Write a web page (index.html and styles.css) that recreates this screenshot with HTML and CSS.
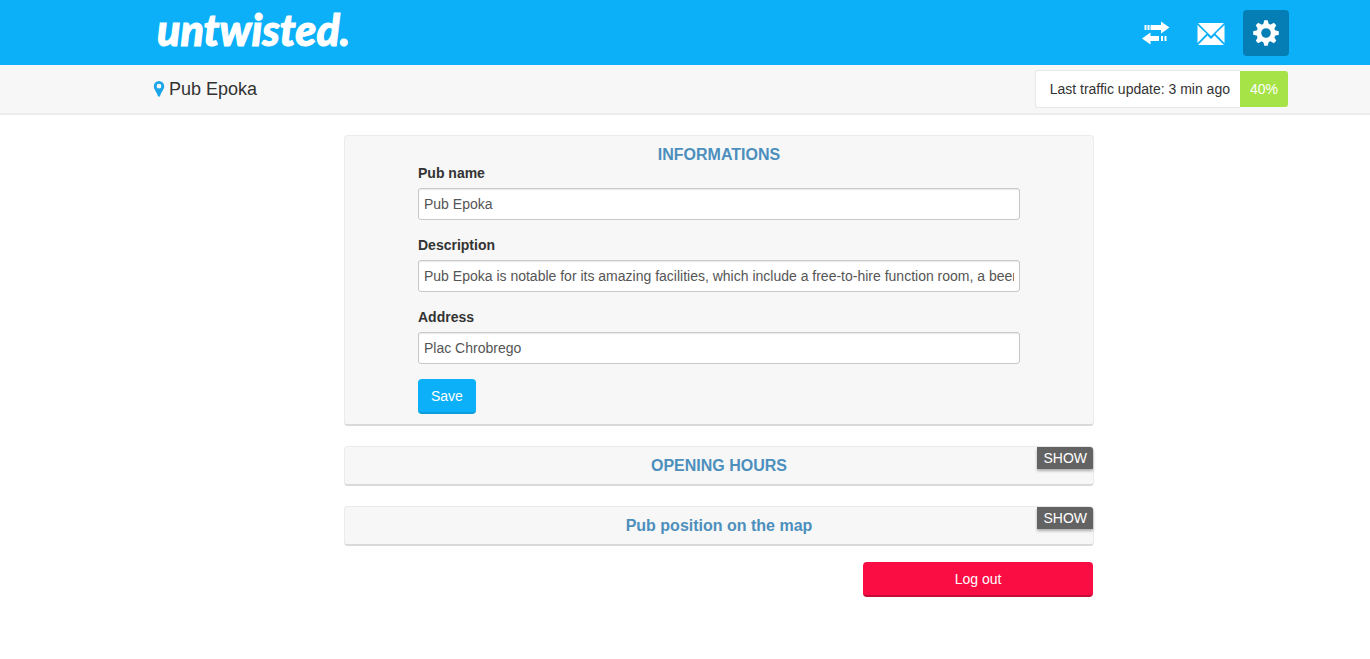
FILE: index.html
```html
<!DOCTYPE html>
<html lang="en">
<head>
<meta charset="utf-8">
<title>untwisted. – Pub Epoka</title>
<meta name="viewport" content="width=device-width, initial-scale=1">
<link rel="stylesheet" href="styles.css">
</head>
<body>
<header class="topbar">
  <div class="container">
    <a class="brand" href="#">untwisted.</a>
    <nav class="nav">
      <a class="nav-link" href="#" aria-label="Traffic">
        <svg class="icon" viewBox="0 0 28 28" width="28" height="28"><path d="M2.500 6h2v5h-2zM5.500 6h2v5h-2zM8.500 6H19V2.500L27.500 8.500 19 14.500V11H8.500zM24.500 22h-2v-5h2zM21 22h-2v-5h2zM17 22H8.500v3.500L0 19.500l8.500-6V17H17z" fill="currentColor"/></svg>
      </a>
      <a class="nav-link" href="#" aria-label="Messages">
        <svg class="icon" viewBox="0 0 28 28" width="28" height="28"><path d="M1 4h26L14 17zM.5 6l9 8.700-9 9.300zM27.500 6v18l-9-9.300zM10.500 16.500L14 20l3.500-3.500L27 26H1z" fill="currentColor"/></svg>
      </a>
      <a class="nav-link nav-link-active" href="#" aria-label="Settings" aria-current="page">
        <svg class="icon" viewBox="0 0 28 28" width="28" height="28">
          <g fill="currentColor">
            <path fill-rule="evenodd" d="M14 4.500a9.500 9.500 0 1 0 0 19 9.500 9.500 0 0 0 0-19zm0 4.700a4.800 4.800 0 1 1 0 9.600 4.800 4.800 0 0 1 0-9.600z"/>
            <path id="tooth" d="M12.300 1.200h3.400l1.300 4.800h-6z"/>
            <use href="#tooth" transform="rotate(45 14 14)"/>
            <use href="#tooth" transform="rotate(90 14 14)"/>
            <use href="#tooth" transform="rotate(135 14 14)"/>
            <use href="#tooth" transform="rotate(180 14 14)"/>
            <use href="#tooth" transform="rotate(225 14 14)"/>
            <use href="#tooth" transform="rotate(270 14 14)"/>
            <use href="#tooth" transform="rotate(315 14 14)"/>
          </g>
        </svg>
      </a>
    </nav>
  </div>
</header>

<div class="subbar">
  <div class="container">
    <div class="place">
      <svg class="pin" viewBox="0 0 12 16" width="12" height="16"><path fill-rule="evenodd" d="M6 0a5.200 5.200 0 0 1 5.200 5.200C11.200 8.700 8 11 7 15.500H5C4 11 .8 8.700.8 5.200A5.200 5.200 0 0 1 6 0zm0 2.800a2.400 2.400 0 1 0 0 4.800 2.400 2.400 0 0 0 0-4.800z" fill="currentColor"/></svg>
      <span>Pub Epoka</span>
    </div>
    <div class="traffic">
      <span class="traffic-text">Last traffic update: 3 min ago</span>
      <span class="traffic-value">40%</span>
    </div>
  </div>
</div>

<main class="content">
  <section class="card">
    <h2 class="card-title">INFORMATIONS</h2>
    <form class="form">
      <div class="field">
        <label class="label" for="name">Pub name</label>
        <input class="input" id="name" type="text" value="Pub Epoka">
      </div>
      <div class="field">
        <label class="label" for="description">Description</label>
        <input class="input" id="description" type="text" value="Pub Epoka is notable for its amazing facilities, which include a free-to-hire function room, a beer garden and live music.">
      </div>
      <div class="field">
        <label class="label" for="address">Address</label>
        <input class="input" id="address" type="text" value="Plac Chrobrego">
      </div>
      <button class="button button-save" type="button">Save</button>
    </form>
  </section>

  <section class="card">
    <h2 class="card-title">OPENING HOURS</h2>
    <button class="toggle" type="button">SHOW</button>
  </section>

  <section class="card">
    <h2 class="card-title">Pub position on the map</h2>
    <button class="toggle" type="button">SHOW</button>
  </section>

  <div class="actions">
    <button class="button button-logout" type="button">Log out</button>
  </div>
</main>
</body>
</html>
```
FILE: styles.css
```css
* {
  box-sizing: border-box;
}

body {
  margin: 0;
  background: #fff;
  color: #333;
  font: 14px/20px "Liberation Sans", Arial, sans-serif;
}

.topbar,
.subbar,
.content {
  padding-left: 68px;
}

.container {
  display: flex;
  align-items: center;
  justify-content: space-between;
  max-width: 1140px;
  margin: 0 auto;
}

.topbar {
  background: #0bb0f8;
}

.topbar .container {
  min-height: 65px;
}

.brand {
  padding: 0 8px 6px;
  color: #fff;
  font: italic 900 43px/48px Lato, sans-serif;
  text-decoration: none;
  -webkit-text-stroke: 1px #fff;
}

.nav {
  display: flex;
  gap: 9px;
}

.nav-link {
  display: flex;
  align-items: center;
  justify-content: center;
  width: 46px;
  height: 46px;
  border-radius: 4px;
  color: #fff;
}

.nav-link-active {
  background: #047eb5;
}

.subbar {
  background: #f7f7f7;
  border-bottom: 2px solid #ececec;
}

.subbar .container {
  min-height: 48px;
}

.place {
  display: flex;
  align-items: center;
  gap: 4px;
  padding-left: 4px;
  font-size: 18px;
}

.pin {
  color: #1ba5e8;
}

.traffic {
  display: flex;
  margin-right: 1px;
  line-height: 36px;
}

.traffic-text {
  padding: 0 10px 0 14px;
  background: #fff;
  border: 1px solid #e7e7e7;
  border-right: 0;
  border-radius: 3px 0 0 3px;
}

.traffic-value {
  margin: 1px 0;
  padding: 0 10px;
  background: #a5e346;
  border-radius: 0 3px 3px 0;
  color: #fff;
}

.content {
  display: flex;
  flex-direction: column;
  align-items: center;
  gap: 20px;
  padding-top: 20px;
}

.card {
  position: relative;
  width: 100%;
  max-width: 750px;
  padding: 11px 0 10px;
  background: #f7f7f7;
  border: 1px solid #ebebeb;
  border-bottom: 2px solid #d9d9d9;
  border-radius: 4px;
}

.card-title {
  margin: 0;
  color: #4c8fbd;
  font-size: 16px;
  line-height: 16px;
  text-align: center;
}

.form {
  max-width: 602px;
  margin: 0 auto;
}

.field {
  margin-bottom: 15px;
}

.label {
  display: block;
  margin-bottom: 5px;
  font-weight: bold;
}

.input {
  display: block;
  width: 100%;
  height: 32px;
  padding: 0 5px;
  background: #fff;
  border: 1px solid #c8c8c8;
  border-radius: 3px;
  box-shadow: inset 0 1px 1px rgba(0, 0, 0, 0.08);
  color: #555;
  font: inherit;
}

.button {
  height: 35px;
  border: 0;
  border-radius: 4px;
  color: #fff;
  font: inherit;
}

.button-save {
  display: block;
  padding: 0 13px;
  background: #0bb0f8;
  border-bottom: 2px solid #0c9bdb;
}

.actions {
  display: flex;
  justify-content: flex-end;
  width: 100%;
  max-width: 750px;
  margin-top: -4px;
  padding-right: 1px;
}

.button-logout {
  width: 230px;
  background: #f90d43;
  border-bottom: 2px solid #c40b36;
}

.toggle {
  position: absolute;
  top: 0;
  right: 0;
  height: 22px;
  padding: 0 6px;
  background: #636363;
  border: 0;
  border-radius: 0 3px 0 0;
  box-shadow: 0 2px 3px rgba(0, 0, 0, 0.3);
  color: #fff;
  font: inherit;
}
```
